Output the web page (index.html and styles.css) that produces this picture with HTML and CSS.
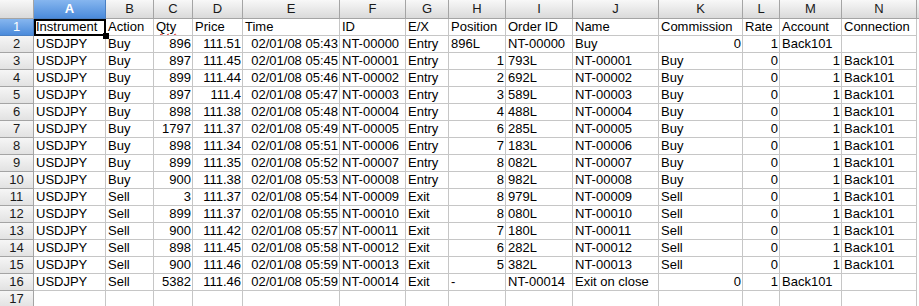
FILE: index.html
```html
<!DOCTYPE html>
<html>
<head>
<meta charset="utf-8">
<link rel="stylesheet" href="styles.css">
</head>
<body>
<div class="sheet">
  <div class="hd corner"></div>
  <div class="hd col sel">A</div><div class="hd col">B</div><div class="hd col">C</div><div class="hd col">D</div><div class="hd col">E</div><div class="hd col">F</div><div class="hd col">G</div><div class="hd col">H</div><div class="hd col">I</div><div class="hd col">J</div><div class="hd col">K</div><div class="hd col">L</div><div class="hd col">M</div><div class="hd col">N</div><div class="hd fill"></div>

  <div class="hd rh sel">1</div>
  <div class="c active">Instrument</div><div class="c">Action</div><div class="c"><span class="spell">Qty</span></div><div class="c">Price</div><div class="c">Time</div><div class="c">ID</div><div class="c">E/X</div><div class="c">Position</div><div class="c">Order ID</div><div class="c">Name</div><div class="c">Commission</div><div class="c">Rate</div><div class="c">Account</div><div class="c">Connection</div><div class="c blank"></div>

  <div class="hd rh">2</div>
  <div class="c">USDJPY</div><div class="c">Buy</div><div class="c r">896</div><div class="c r">111.51</div><div class="c r">02/01/08 05:43</div><div class="c">NT-00000</div><div class="c">Entry</div><div class="c">896L</div><div class="c">NT-00000</div><div class="c">Buy</div><div class="c r">0</div><div class="c r">1</div><div class="c">Back101</div><div class="c"></div><div class="c blank"></div>

  <div class="hd rh">3</div>
  <div class="c">USDJPY</div><div class="c">Buy</div><div class="c r">897</div><div class="c r">111.45</div><div class="c r">02/01/08 05:45</div><div class="c">NT-00001</div><div class="c">Entry</div><div class="c r">1</div><div class="c">793L</div><div class="c">NT-00001</div><div class="c">Buy</div><div class="c r">0</div><div class="c r">1</div><div class="c">Back101</div><div class="c blank"></div>

  <div class="hd rh">4</div>
  <div class="c">USDJPY</div><div class="c">Buy</div><div class="c r">899</div><div class="c r">111.44</div><div class="c r">02/01/08 05:46</div><div class="c">NT-00002</div><div class="c">Entry</div><div class="c r">2</div><div class="c">692L</div><div class="c">NT-00002</div><div class="c">Buy</div><div class="c r">0</div><div class="c r">1</div><div class="c">Back101</div><div class="c blank"></div>

  <div class="hd rh">5</div>
  <div class="c">USDJPY</div><div class="c">Buy</div><div class="c r">897</div><div class="c r">111.4</div><div class="c r">02/01/08 05:47</div><div class="c">NT-00003</div><div class="c">Entry</div><div class="c r">3</div><div class="c">589L</div><div class="c">NT-00003</div><div class="c">Buy</div><div class="c r">0</div><div class="c r">1</div><div class="c">Back101</div><div class="c blank"></div>

  <div class="hd rh">6</div>
  <div class="c">USDJPY</div><div class="c">Buy</div><div class="c r">898</div><div class="c r">111.38</div><div class="c r">02/01/08 05:48</div><div class="c">NT-00004</div><div class="c">Entry</div><div class="c r">4</div><div class="c">488L</div><div class="c">NT-00004</div><div class="c">Buy</div><div class="c r">0</div><div class="c r">1</div><div class="c">Back101</div><div class="c blank"></div>

  <div class="hd rh">7</div>
  <div class="c">USDJPY</div><div class="c">Buy</div><div class="c r">1797</div><div class="c r">111.37</div><div class="c r">02/01/08 05:49</div><div class="c">NT-00005</div><div class="c">Entry</div><div class="c r">6</div><div class="c">285L</div><div class="c">NT-00005</div><div class="c">Buy</div><div class="c r">0</div><div class="c r">1</div><div class="c">Back101</div><div class="c blank"></div>

  <div class="hd rh">8</div>
  <div class="c">USDJPY</div><div class="c">Buy</div><div class="c r">898</div><div class="c r">111.34</div><div class="c r">02/01/08 05:51</div><div class="c">NT-00006</div><div class="c">Entry</div><div class="c r">7</div><div class="c">183L</div><div class="c">NT-00006</div><div class="c">Buy</div><div class="c r">0</div><div class="c r">1</div><div class="c">Back101</div><div class="c blank"></div>

  <div class="hd rh">9</div>
  <div class="c">USDJPY</div><div class="c">Buy</div><div class="c r">899</div><div class="c r">111.35</div><div class="c r">02/01/08 05:52</div><div class="c">NT-00007</div><div class="c">Entry</div><div class="c r">8</div><div class="c">082L</div><div class="c">NT-00007</div><div class="c">Buy</div><div class="c r">0</div><div class="c r">1</div><div class="c">Back101</div><div class="c blank"></div>

  <div class="hd rh">10</div>
  <div class="c">USDJPY</div><div class="c">Buy</div><div class="c r">900</div><div class="c r">111.38</div><div class="c r">02/01/08 05:53</div><div class="c">NT-00008</div><div class="c">Entry</div><div class="c r">8</div><div class="c">982L</div><div class="c">NT-00008</div><div class="c">Buy</div><div class="c r">0</div><div class="c r">1</div><div class="c">Back101</div><div class="c blank"></div>

  <div class="hd rh">11</div>
  <div class="c">USDJPY</div><div class="c">Sell</div><div class="c r">3</div><div class="c r">111.37</div><div class="c r">02/01/08 05:54</div><div class="c">NT-00009</div><div class="c">Exit</div><div class="c r">8</div><div class="c">979L</div><div class="c">NT-00009</div><div class="c">Sell</div><div class="c r">0</div><div class="c r">1</div><div class="c">Back101</div><div class="c blank"></div>

  <div class="hd rh">12</div>
  <div class="c">USDJPY</div><div class="c">Sell</div><div class="c r">899</div><div class="c r">111.37</div><div class="c r">02/01/08 05:55</div><div class="c">NT-00010</div><div class="c">Exit</div><div class="c r">8</div><div class="c">080L</div><div class="c">NT-00010</div><div class="c">Sell</div><div class="c r">0</div><div class="c r">1</div><div class="c">Back101</div><div class="c blank"></div>

  <div class="hd rh">13</div>
  <div class="c">USDJPY</div><div class="c">Sell</div><div class="c r">900</div><div class="c r">111.42</div><div class="c r">02/01/08 05:57</div><div class="c">NT-00011</div><div class="c">Exit</div><div class="c r">7</div><div class="c">180L</div><div class="c">NT-00011</div><div class="c">Sell</div><div class="c r">0</div><div class="c r">1</div><div class="c">Back101</div><div class="c blank"></div>

  <div class="hd rh">14</div>
  <div class="c">USDJPY</div><div class="c">Sell</div><div class="c r">898</div><div class="c r">111.45</div><div class="c r">02/01/08 05:58</div><div class="c">NT-00012</div><div class="c">Exit</div><div class="c r">6</div><div class="c">282L</div><div class="c">NT-00012</div><div class="c">Sell</div><div class="c r">0</div><div class="c r">1</div><div class="c">Back101</div><div class="c blank"></div>

  <div class="hd rh">15</div>
  <div class="c">USDJPY</div><div class="c">Sell</div><div class="c r">900</div><div class="c r">111.46</div><div class="c r">02/01/08 05:59</div><div class="c">NT-00013</div><div class="c">Exit</div><div class="c r">5</div><div class="c">382L</div><div class="c">NT-00013</div><div class="c">Sell</div><div class="c r">0</div><div class="c r">1</div><div class="c">Back101</div><div class="c blank"></div>

  <div class="hd rh">16</div>
  <div class="c">USDJPY</div><div class="c">Sell</div><div class="c r">5382</div><div class="c r">111.46</div><div class="c r">02/01/08 05:59</div><div class="c">NT-00014</div><div class="c">Exit</div><div class="c">-</div><div class="c">NT-00014</div><div class="c">Exit on close</div><div class="c r">0</div><div class="c r">1</div><div class="c">Back101</div><div class="c"></div><div class="c blank"></div>

  <div class="hd rh">17</div>
  <div class="c"></div><div class="c"></div><div class="c"></div><div class="c"></div><div class="c"></div><div class="c"></div><div class="c"></div><div class="c"></div><div class="c"></div><div class="c"></div><div class="c"></div><div class="c"></div><div class="c"></div><div class="c"></div><div class="c blank"></div>
</div>
</body>
</html>
```

FILE: styles.css
```css
html, body {
  margin: 0;
  padding: 0;
  background: #ffffff;
  overflow: hidden;
}
.sheet {
  display: grid;
  grid-template-columns: 34px 72px 48px 39px 50px 97px 66px 43px 57px 67px 86px 84px 37px 62px 75px 2px;
  grid-template-rows: 19px;
  grid-auto-rows: 17px;
  font-family: "Liberation Sans", Arial, sans-serif;
  font-size: 13px;
  color: #000;
}
.c {
  box-sizing: border-box;
  border-right: 1px solid #c6c6c6;
  border-bottom: 1px solid #c6c6c6;
  padding: 0 2px 0 2px;
  line-height: 16px;
  white-space: nowrap;
  overflow: hidden;
}
.c.r {
  text-align: right;
  padding-right: 1px;
}
.c.blank {
  border: none;
  padding: 0;
}
.spell {
  text-decoration: underline wavy #e03030;
  text-decoration-thickness: 1px;
  text-underline-offset: 2px;
}
.active {
  position: relative;
  overflow: visible;
  outline: 2px solid #000;
  outline-offset: -2px;
  z-index: 2;
}
.active::after {
  content: "";
  position: absolute;
  right: -4px;
  bottom: -4px;
  width: 6px;
  height: 6px;
  background: #000;
}
.hd {
  box-sizing: border-box;
  background: linear-gradient(#f8f8f8, #dadada);
  border-right: 1px solid #a4a4a4;
  border-bottom: 1px solid #a4a4a4;
  color: #1a1a1a;
  text-align: center;
  font-size: 13px;
}
.hd.col {
  line-height: 18px;
}
.hd.rh {
  line-height: 16px;
  background: linear-gradient(#f6f6f6, #e2e2e2);
}
.hd.fill {
  border-right: none;
}
.hd.sel {
  background: linear-gradient(#86b6ef, #4b8bdb);
  color: #ffffff;
  font-weight: bold;
  border-right-color: #4a7fc2;
  border-bottom-color: #4a7fc2;
}
.hd.rh.sel {
  font-weight: normal;
}
```
